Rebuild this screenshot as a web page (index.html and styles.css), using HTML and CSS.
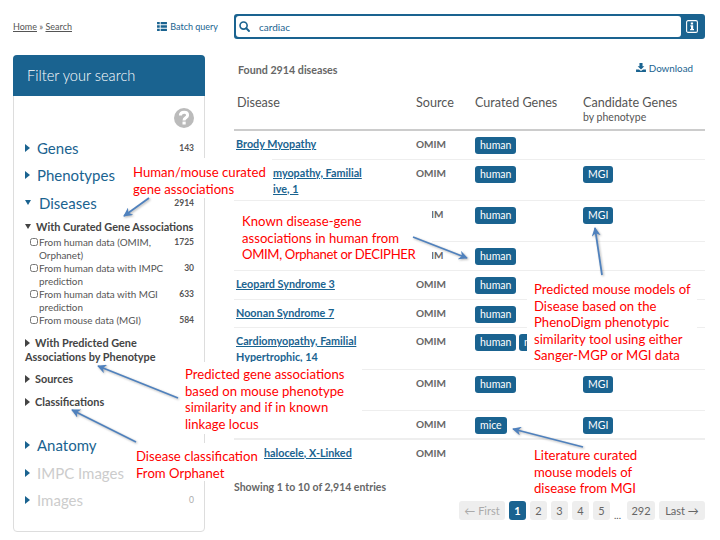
FILE: index.html
```html
<!DOCTYPE html>
<html lang="en">

<head>
    <meta charset="UTF-8">
    <meta name="viewport" content="width=device-width, initial-scale=1.0">
    <title>Disease search</title>
    <link rel="stylesheet" href="styles.css">
</head>

<body>
    <div class="page">
        <aside class="left">
            <div class="topbar">
                <div class="crumbs"><a href="#">Home</a> &raquo; <a href="#">Search</a></div>
                <a class="batch" href="#">
                    <svg width="10" height="9" viewBox="0 0 11 10"><path fill="#1a6390" d="M0 0h3v2.600H0zM4 0h7v2.600H4zM0 3.700h3v2.600H0zM4 3.700h7v2.600H4zM0 7.400h3V10H0zM4 7.400h7V10H4z"/></svg>
                    Batch query
                </a>
            </div>
            <div class="filter">
                <h2 class="filter-title">Filter your search</h2>
                <div class="filter-body">
                    <div class="help">
                        <svg width="20" height="20" viewBox="0 0 20 20"><circle cx="10" cy="10" r="10" fill="#bbb"/><path fill="none" stroke="#fff" stroke-width="3" d="M6.400 7.600c0-2.100 1.600-3.300 3.700-3.300 2 0 3.500 1.100 3.500 2.900 0 2.600-3.600 2.600-3.600 5.200"/><rect x="8.500" y="13.600" width="3.200" height="2.900" fill="#fff"/></svg>
                    </div>
                    <div class="facet"><span class="tri"></span><span class="facet-name">Genes</span><span class="num">143</span></div>
                    <div class="facet"><span class="tri"></span><span class="facet-name">Phenotypes</span></div>
                    <div class="facet"><span class="tri tri-down"></span><span class="facet-name">Diseases</span><span class="num">2914</span></div>

                    <div class="sub sub-first"><span class="tri tri-dark tri-down"></span>With Curated Gene Associations</div>
                    <label class="check"><input type="checkbox"><span>From human data (OMIM, Orphanet)</span><span class="num">1725</span></label>
                    <label class="check"><input type="checkbox"><span>From human data with IMPC prediction</span><span class="num">30</span></label>
                    <label class="check"><input type="checkbox"><span>From human data with MGI prediction</span><span class="num">633</span></label>
                    <label class="check"><input type="checkbox"><span>From mouse data (MGI)</span><span class="num">584</span></label>

                    <div class="sub sub-two"><span class="tri tri-dark"></span>With Predicted Gene Associations by Phenotype</div>
                    <div class="sub sub-src"><span class="tri tri-dark"></span>Sources</div>
                    <div class="sub sub-cls"><span class="tri tri-dark"></span>Classifications</div>

                    <div class="facet facet-anatomy"><span class="tri"></span><span class="facet-name">Anatomy</span></div>
                    <div class="facet"><span class="tri"></span><span class="facet-name facet-off">IMPC Images</span></div>
                    <div class="facet"><span class="tri"></span><span class="facet-name facet-off">Images</span><span class="num num-off">0</span></div>
                </div>
            </div>
        </aside>

        <main class="main">
            <div class="search">
                <div class="search-field">
                    <svg width="11" height="11" viewBox="0 0 13 13"><circle cx="5.400" cy="5.400" r="4.200" fill="none" stroke="#1a6390" stroke-width="1.900"/><path stroke="#1a6390" stroke-width="2.200" stroke-linecap="round" d="M8.600 8.600L11.800 11.800"/></svg>
                    <span>cardiac</span>
                </div>
                <div class="search-info">
                    <svg width="12" height="13" viewBox="0 0 12 13"><rect x=".6" y=".6" width="10.800" height="11.800" rx="1.500" fill="none" stroke="#fff" stroke-width="1.100"/><path fill="#fff" d="M4.800 2.600h2.300v1.800H4.800zM4.300 5.300h2.900v3.800h.8v1.200H4.100V9.100h.9V6.500h-.7z"/></svg>
                </div>
            </div>

            <div class="found">
                <span>Found 2914 diseases</span>
                <a class="download" href="#">
                    <svg width="10" height="9" viewBox="0 0 11 10"><path fill="#1a6390" d="M3.800 0h3.400v3.600h2L5.500 7.200 1.800 3.600h2zM0 7.200h3.200l2.300 1.600 2.300-1.600H11V10H0z"/></svg>
                    Download
                </a>
            </div>

            <table class="grid">
                <colgroup>
                    <col class="col-disease">
                    <col class="col-source">
                    <col class="col-curated">
                    <col>
                </colgroup>
                <thead>
                    <tr>
                        <th>Disease</th>
                        <th>Source</th>
                        <th>Curated Genes</th>
                        <th>Candidate Genes<small>by phenotype</small></th>
                    </tr>
                </thead>
                <tbody>
                    <tr class="h29">
                        <td><a href="#">Brody Myopathy</a></td>
                        <td>OMIM</td>
                        <td><span class="tag">human</span></td>
                        <td></td>
                    </tr>
                    <tr class="h41">
                        <td class="cut-name"><a href="#">myopathy, Familial</a><br><a href="#">ive, 1</a></td>
                        <td>OMIM</td>
                        <td><span class="tag">human</span></td>
                        <td><span class="tag">MGI</span></td>
                    </tr>
                    <tr class="h41">
                        <td></td>
                        <td class="cut-source">IM</td>
                        <td><span class="tag">human</span></td>
                        <td><span class="tag">MGI</span></td>
                    </tr>
                    <tr class="h29">
                        <td></td>
                        <td class="cut-source">IM</td>
                        <td><span class="tag">human</span></td>
                        <td></td>
                    </tr>
                    <tr class="h29">
                        <td><a href="#">Leopard Syndrome 3</a></td>
                        <td>OMIM</td>
                        <td><span class="tag">human</span></td>
                        <td></td>
                    </tr>
                    <tr class="h28">
                        <td><a href="#">Noonan Syndrome 7</a></td>
                        <td>OMIM</td>
                        <td><span class="tag">human</span></td>
                        <td></td>
                    </tr>
                    <tr class="h42">
                        <td><a href="#">Cardiomyopathy, Familial Hypertrophic, 14</a></td>
                        <td>OMIM</td>
                        <td><span class="tag">human</span> <span class="tag tag-cut">m</span></td>
                        <td></td>
                    </tr>
                    <tr class="h41">
                        <td></td>
                        <td>OMIM</td>
                        <td><span class="tag">human</span></td>
                        <td><span class="tag">MGI</span></td>
                    </tr>
                    <tr class="h29 last-marked">
                        <td></td>
                        <td>OMIM</td>
                        <td><span class="tag">mice</span></td>
                        <td><span class="tag">MGI</span></td>
                    </tr>
                    <tr class="h29 no-line">
                        <td class="cut-tail"><a href="#">halocele, X-Linked</a></td>
                        <td>OMIM</td>
                        <td></td>
                        <td></td>
                    </tr>
                </tbody>
            </table>

            <div class="showing">Showing 1 to 10 of 2,914 entries</div>

            <nav class="pager">
                <a class="off pg-wide" href="#">&larr; First</a>
                <a class="on" href="#">1</a>
                <a href="#">2</a>
                <a href="#">3</a>
                <a href="#">4</a>
                <a href="#">5</a>
                <span class="dots">...</span>
                <a class="pg-mid" href="#">292</a>
                <a class="pg-wide" href="#">Last &rarr;</a>
            </nav>
        </main>
    </div>

    <!-- callouts pasted over the screenshot -->
    <div class="note n1">Human/mouse curated<br>gene associations</div>
    <div class="note n2">Known disease-gene<br>associations in human from<br><span class="caps">OMIM, Orphanet or DECIPHER</span></div>
    <div class="note n3">Predicted mouse models of<br>Disease based on the<br>PhenoDigm phenotypic<br>similarity tool using either<br>Sanger-MGP or MGI data</div>
    <div class="note n4">Predicted gene associations<br>based on mouse phenotype<br>similarity and if in known<br>linkage locus</div>
    <div class="note n5">Disease classification<br>From Orphanet</div>
    <div class="note n6">Literature curated<br>mouse models of<br>disease from MGI</div>

    <svg class="arrows" width="720" height="540" viewBox="0 0 720 540">
        <defs>
            <marker id="head" viewBox="0 0 10 10" refX="9" refY="5" markerWidth="5" markerHeight="5" orient="auto">
                <path d="M0 0L10 5L0 10L3 5z" fill="#4f81bd"/>
            </marker>
        </defs>
        <g stroke="#4f81bd" stroke-width="1.800">
            <line x1="149" y1="198" x2="124" y2="216" marker-end="url(#head)"/>
            <line x1="413" y1="237" x2="467" y2="258" marker-end="url(#head)"/>
            <line x1="602" y1="275" x2="595" y2="228" marker-end="url(#head)"/>
            <line x1="178" y1="398" x2="98" y2="366" marker-end="url(#head)"/>
            <line x1="136" y1="442" x2="72" y2="410" marker-end="url(#head)"/>
            <line x1="583" y1="447" x2="513" y2="429" marker-end="url(#head)"/>
        </g>
    </svg>
</body>

</html>
```

FILE: styles.css
```css
body {
    margin: 0;
    font-family: Lato, "Open Sans", sans-serif;
    color: #555;
    background: #fff;
}

a {
    color: #1a6390;
}

.page {
    display: flex;
    width: 720px;
    height: 540px;
    overflow: hidden;
}

/* left column */
.left {
    width: 192px;
    margin-left: 13px;
}

.topbar {
    display: flex;
    justify-content: space-between;
    align-items: center;
    height: 55px;
    box-sizing: border-box;
    padding-bottom: 3px;
    font-size: 9px;
    width: 205px;
}

.crumbs,
.crumbs a {
    color: #555;
}

.batch {
    display: flex;
    align-items: center;
    gap: 3px;
    font-size: 9px;
    text-decoration: none;
}

.filter {
    height: 477px;
    box-sizing: border-box;
    border: 1px solid #ddd;
    border-radius: 4px;
}

.filter-title {
    margin: -1px -1px 0;
    height: 41px;
    padding-left: 14px;
    line-height: 41px;
    background: #1a6390;
    color: #fff;
    font-size: 14.600px;
    font-weight: 300;
    border-radius: 4px 4px 0 0;
}

.filter-body {
    padding: 12px 10px 0 11px;
}

.help {
    display: flex;
    justify-content: flex-end;
    height: 20px;
}

.facet {
    display: flex;
    align-items: center;
    height: 27.500px;
    color: #1a6390;
}

.facet:nth-child(2) {
    margin-top: 6px;
}

.facet-name {
    font-size: 15px;
    flex: 1;
}

.facet-off {
    color: #ccc;
}

.facet-anatomy {
    margin-top: 23px;
}

.tri {
    width: 0;
    height: 0;
    margin-right: 7px;
    border-left: 5px solid #1a6390;
    border-top: 4px solid transparent;
    border-bottom: 4px solid transparent;
}

.tri-down {
    margin-right: 8px;
    border-top: 5px solid #1a6390;
    border-left: 3.500px solid transparent;
    border-right: 3.500px solid transparent;
    border-bottom: 0;
}

.tri-dark {
    display: inline-block;
    margin-right: 5px;
    border-left-color: #444;
}

.tri-dark.tri-down {
    margin-right: 5px;
    border-left-color: transparent;
    border-top-color: #444;
    vertical-align: 2px;
}

.num {
    font-size: 8.500px;
    font-weight: 700;
    color: #555;
    white-space: nowrap;
}

.num-off {
    font-weight: 400;
    color: #aaa;
}

.sub {
    font-size: 10.900px;
    font-weight: 700;
    color: #444;
    line-height: 14px;
}

.sub-first {
    margin: 3px 0 2px;
    white-space: nowrap;
}

.sub-two {
    margin-top: 9px;
}

.sub-src {
    margin-top: 8px;
}

.sub-cls {
    margin-top: 9px;
}

.check {
    display: flex;
    align-items: flex-start;
    font-size: 9.900px;
    line-height: 13px;
    color: #555;
}

.check input {
    flex: none;
    width: 8px;
    height: 8px;
    margin: 2px 1px 0 5px;
}

.check span:nth-child(2) {
    flex: 1;
    padding-right: 8px;
}

/* results */
.main {
    width: 471px;
    margin-left: 29px;
    padding-top: 14px;
}

.search {
    display: flex;
    height: 25px;
    box-sizing: border-box;
    background: #1a6390;
    border-radius: 3px;
    padding: 2px;
}

.search-field {
    flex: 1;
    display: flex;
    align-items: center;
    gap: 9px;
    padding-left: 3px;
    background: #fff;
    border-radius: 3px;
    color: #1a6390;
    font-size: 10px;
}

.search-info {
    display: flex;
    align-items: center;
    justify-content: center;
    width: 22px;
}

.found {
    display: flex;
    justify-content: space-between;
    margin-top: 24px;
    padding: 0 12px 0 4px;
    font-size: 10.700px;
    font-weight: 700;
    color: #666;
    line-height: 14px;
}

.download {
    display: flex;
    align-items: center;
    gap: 3px;
    height: 9px;
    font-size: 9.800px;
    font-weight: 400;
    text-decoration: none;
}

.grid {
    width: 471px;
    margin-top: 6px;
    border-collapse: collapse;
    table-layout: fixed;
}

.col-disease {
    width: 182px;
}

.col-source {
    width: 59px;
}

.col-curated {
    width: 108px;
}

.grid th {
    height: 47px;
    padding: 12px 0 0;
    box-sizing: border-box;
    border-bottom: 2px solid #ccc;
    text-align: left;
    vertical-align: top;
    font-size: 12.600px;
    font-weight: 400;
    color: #555;
}

.grid th:first-child {
    padding-left: 3px;
}

.grid th small {
    display: block;
    font-size: 10.500px;
    line-height: 14px;
}

.grid td {
    padding: 5px 0 0;
    box-sizing: border-box;
    border-bottom: 1px solid #eee;
    vertical-align: top;
    font-size: 10.800px;
    font-weight: 700;
    line-height: 16px;
    color: #666;
}

.grid td:nth-child(2) {
    font-size: 10px;
}

.grid td:nth-child(3),
.grid td:nth-child(4) {
    padding-top: 6px;
    white-space: nowrap;
}

.grid td:first-child {
    padding-left: 2px;
    padding-right: 30px;
}

.grid td.cut-name {
    padding-left: 39px;
    padding-right: 0;
}

.grid td.cut-tail {
    padding-left: 30px;
    padding-right: 0;
}

.grid td.cut-source {
    padding-left: 15px;
}

.grid td a {
    color: #1a6390;
}

.h28 {
    height: 28px;
}

.h29 {
    height: 29px;
}

.h41 {
    height: 41px;
}

.h42 {
    height: 42px;
}

.last-marked td {
    border-bottom: 2px solid #eee;
}

.no-line td {
    border-bottom: 0;
}

.tag {
    display: inline-block;
    height: 17px;
    padding: 0 5px;
    border-radius: 3px;
    background: #1a6390;
    color: #fff;
    font-size: 10.500px;
    font-weight: 400;
    line-height: 17px;
}

.tag-cut {
    width: 9px;
    box-sizing: border-box;
    padding-right: 0;
    border-radius: 3px 0 0 3px;
    overflow: hidden;
    vertical-align: top;
}

.showing {
    margin-top: 12px;
    font-size: 10.500px;
    font-weight: 700;
    color: #666;
    line-height: 14px;
}

.pager {
    display: flex;
    justify-content: flex-end;
    gap: 4px;
    margin-top: 7px;
}

.pager a {
    width: 17px;
    height: 19px;
    border-radius: 3px;
    background: #eee;
    color: #666;
    font-size: 11px;
    line-height: 19px;
    text-align: center;
    text-decoration: none;
}

.pager .pg-wide {
    width: 46px;
}

.pager .pg-mid {
    width: 28px;
}

.pager .off {
    color: #aaa;
}

.pager .on {
    background: #1a6390;
    color: #fff;
    font-weight: 700;
}

.dots {
    width: 9px;
    font-size: 10px;
    line-height: 28px;
    height: 19px;
}

/* callouts */
.note {
    position: absolute;
    box-sizing: border-box;
    background: #fff;
    color: #f00;
    font-size: 13.150px;
    line-height: 16.500px;
    white-space: nowrap;
}

.caps {
    letter-spacing: -.35px;
}

.n1 {
    left: 130px;
    top: 158px;
    width: 142px;
    height: 40px;
    padding: 6px 0 0 3px;
}

.n2 {
    left: 234px;
    top: 205px;
    width: 198px;
    height: 63px;
    padding: 8px 0 0 8px;
}

.n3 {
    left: 527px;
    top: 275px;
    width: 170px;
    height: 90px;
    padding: 6px 0 0 7px;
}

.n4 {
    left: 182px;
    top: 362px;
    width: 180px;
    height: 72px;
    padding: 4px 0 0 3px;
}

.n5 {
    left: 132px;
    top: 443px;
    width: 132px;
    height: 38px;
    padding: 5px 0 0 4px;
}

.n6 {
    left: 534px;
    top: 447px;
    background: none;
}

.arrows {
    position: absolute;
    left: 0;
    top: 0;
    pointer-events: none;
}

.arrows g {
    filter: drop-shadow(1px 1px 1px rgba(0, 0, 0, .3));
}
```
